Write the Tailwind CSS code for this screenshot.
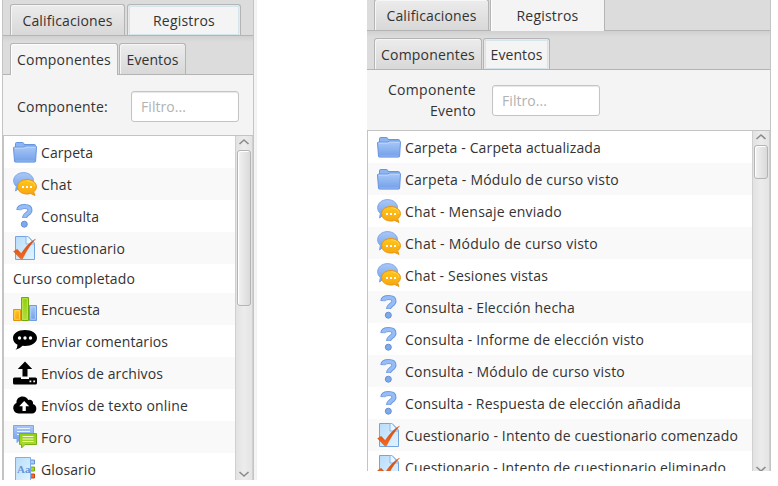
<!DOCTYPE html>
<html lang="es">
<head>
<meta charset="utf-8">
<title>Registros</title>
<script src="https://cdn.jsdelivr.net/npm/@tailwindcss/browser@4"></script>
</head>
<body class="w-[778px] h-[486px] overflow-hidden bg-white font-['Open_Sans','Noto_Sans',sans-serif] text-[14px] text-[#333] whitespace-nowrap">
<svg class="absolute w-0 h-0">
  <defs>
    <linearGradient id="blue" x2="0" y2="1"><stop stop-color="#a9c8f8"/><stop offset="1" stop-color="#719fe8"/></linearGradient>
    <linearGradient id="orange" x2="0" y2="1"><stop stop-color="#ffc61c"/><stop offset="1" stop-color="#f9a40c"/></linearGradient>
    <linearGradient id="green" x2="0" y2="1"><stop stop-color="#8fd00c"/><stop offset="1" stop-color="#b4dc3c"/></linearGradient>
    <linearGradient id="page" x2="1" y2="1"><stop stop-color="#b9dcfa"/><stop offset="1" stop-color="#e0f4ff"/></linearGradient>
    <linearGradient id="tick" x2="0" y2="1"><stop stop-color="#c84a14"/><stop offset="1" stop-color="#f8681c"/></linearGradient>
  </defs>
  <symbol id="folder" viewBox="0 0 24 24">
    <path d="M2.500 7V3.500q0-1 1-1h6q1 0 1.300 1L11 4.500h10.500q1 0 1 1V10h-20z" fill="#8db5f2" stroke="#6795df"/>
    <path d="M.5 8q0-.9 1-.9h9.500l1-1h10.500q1.100 0 1 1l-.9 14q0 1-1 1H2.500q-1 0-1-1z" fill="url(#blue)" stroke="#6594df"/>
    <path d="M1.700 8.200h9.800l1-1h9.900" fill="none" stroke="#c0d8fb"/>
    <path d="M2.500 21h19" stroke="#8fb6f2"/>
  </symbol>
  <symbol id="chat" viewBox="0 0 24 24">
    <path d="M10.500.6C16 .6 20.500 4.200 20.500 8.800S16 17.500 10.500 17.500q-2.500 0-4.700-1L2.500 19l.8-4.400Q.6 12 .6 8.800C.6 4.200 5 .6 10.500.6z" fill="url(#blue)" stroke="#7ea7e6"/>
    <path d="M14 7.500c5 0 9.400 3 9.400 7.100 0 2.300-1 4-2.800 5.300l1.400 3.500-4.500-2q-1.500.6-3.500.6c-5.400 0-9.400-3-9.400-7.400s4.400-7.100 9.400-7.100z" fill="url(#orange)" stroke="#e8920c"/>
    <path d="M14 8.800c4 0 7.700 2.300 8 5.500" fill="none" stroke="#ffdc64" stroke-width=".8"/>
    <path d="M9 14h2v2H9zM13 14h2v2h-2zM17 14h2v2h-2z" fill="#fff"/>
  </symbol>
  <symbol id="question" viewBox="0 0 24 24">
    <path d="M5.800 6.200C6 2.900 8.300 2.600 11.700 2.600s5.300 1.300 5.300 3.700c0 3.500-5.400 3.600-5.400 7.700" fill="none" stroke="#6b9ae2" stroke-width="5"/>
    <path d="M5.800 5.500C6.500 3.100 8.300 2.600 11.700 2.600s5.200 1.300 5.200 3.700c0 3.300-5.200 3.500-5.200 7.100" fill="none" stroke="#98bcf5" stroke-width="3.200"/>
    <circle cx="11.300" cy="20.200" r="3" fill="#7fa9ed" stroke="#638fd8"/>
  </symbol>
  <symbol id="quiz" viewBox="0 0 24 24">
    <path d="M2.500.5h12.500l6.500 6.500v16.500h-19z" fill="url(#page)" stroke="#74a4e2"/>
    <path d="M13 .5V8h8.500L15 .5z" fill="#e8f6ff" stroke="#8ab5ea"/>
    <path d="M.6 15.500l3.600-2.300 4 4.300C12 12 16 6.500 22.500 3 17 9 13.500 15 9.500 22.800H7.600z" fill="url(#tick)" stroke="#d0521a" stroke-width=".4"/>
  </symbol>
  <symbol id="chart" viewBox="0 0 24 24">
    <path d="M.6 12.500h7v11h-7z" fill="url(#orange)" stroke="#e5900c"/>
    <path d="M1.800 13.700h4.700v8.600H1.800z" fill="none" stroke="#ffdc62" stroke-width=".8"/>
    <path d="M16.500 8.500h7v15h-7z" fill="url(#blue)" stroke="#6f9be0"/>
    <path d="M17.700 9.700h4.700v12.600h-4.700z" fill="none" stroke="#b8d4fc" stroke-width=".8"/>
    <path d="M8.500.5h7v23h-7z" fill="url(#green)" stroke="#70ac08"/>
    <path d="M9.700 1.700h4.700v20.600H9.700z" fill="none" stroke="#c2e95e" stroke-width=".8"/>
  </symbol>
  <symbol id="comment" viewBox="0 0 24 24">
    <path d="M12 1c7 0 12 3.500 12 8s-5.500 8-12 8l-2.500-.2Q7 20 2.500 20.700q2-2 2-5Q0 13.500 0 9c0-4.500 5-8 12-8z"/>
    <g fill="#fff"><circle cx="6.500" cy="9" r="1.700"/><circle cx="12" cy="9" r="1.700"/><circle cx="17.500" cy="9" r="1.700"/></g>
  </symbol>
  <symbol id="upload" viewBox="0 0 24 24">
    <path d="M12 .5l7.200 7.500h-4.700v7.500h-5V8H4.800z"/>
    <path d="M1.500 16.500H8v1.400h8v-1.400h6.500q1.500 0 1.500 1.500v4q0 1.500-1.500 1.500h-21Q0 23.500 0 22v-4q0-1.500 1.500-1.500z"/>
    <path d="M16.500 19.500h1.800v1.800h-1.800zM20.300 19.500h1.800v1.800h-1.800z" fill="#fff"/>
  </symbol>
  <symbol id="cloud" viewBox="0 0 24 24">
    <path d="M5.500 20.500a5.500 5.500 0 0 1-2-10.500C3.200 6 6 3.500 9.500 3.500c2.800 0 4.800 1.400 5.700 3.600 2.600-1.200 5.300.5 4.800 3.900a4.900 4.900 0 0 1-1 9.500z"/>
    <path d="M11.200 8l5 5.300h-3.400V18H9.500v-4.700H6.200z" fill="#fff"/>
  </symbol>
  <symbol id="forum" viewBox="0 0 24 24">
    <path d="M.5 .5h20v13H8l-4 4v-4H.5z" fill="url(#blue)" stroke="#7da8e8"/>
    <path d="M4 3.500h13M4 6.500h13M4 9.500h5" stroke="#e8f3ff"/>
    <path d="M6.500 8.500h17v11H12L8.500 23v-3.500h-2z" fill="url(#green)" stroke="#77b010"/>
    <path d="M9.500 11.500h11M9.500 14h11M9.500 16.500h11" stroke="#f2fbd0"/>
  </symbol>
  <symbol id="glossary" viewBox="0 0 24 24">
    <path d="M17 3h4.500v4H17z" fill="#a9ccfa" stroke="#5e91dc"/>
    <path d="M17 10h4.500v4H17z" fill="#a5d82c" stroke="#70a90b"/>
    <path d="M17 17h4.500v4H17z" fill="#f36b2c" stroke="#c9440e"/>
    <path d="M2.500.5h15v23h-15z" fill="url(#page)" stroke="#80aeea"/>
    <text x="4" y="15.500" font-family="Liberation Serif" font-weight="bold" font-size="11" fill="#6494d8">Aa</text>
  </symbol>
  <symbol id="up" viewBox="0 0 12 8"><path d="M1.500 6L6 2l4.500 4" fill="none" stroke="#8b8b8b" stroke-width="1.600"/></symbol>
  <symbol id="down" viewBox="0 0 12 8"><path d="M1.500 2L6 6l4.500-4" fill="none" stroke="#8b8b8b" stroke-width="1.600"/></symbol>
</svg>
<div class="flex items-start">
  <section class="ml-[2px] w-[255px] h-[480px] bg-[#f4f4f4] border-r border-[#f0f0f0] overflow-hidden">
    <div class="w-[252px] h-full border-x border-[#c4c4c4] flex flex-col">
      <div class="h-[36px] shrink-0 border-b border-[#b4b4b4] bg-[#dcdcdc] flex items-end pl-[7px]">
        <div class="w-[115px] h-[31px] border border-b-0 border-[#b4b4b4] rounded-t-[3px] bg-linear-to-b from-[#ececec] to-[#d8d8d8] shadow-[inset_1px_1px_#f6f6f6] flex items-center justify-center"><span data-w="89">Calificaciones</span></div>
        <div class="ml-[2px] w-[114px] h-[31px] border border-b-0 border-[#b4b4b4] rounded-t-[3px] bg-[#e9e9e9] p-[1px] pb-0"><div class="h-[29px] border border-[#d5e5ec] bg-[#f4f4f4] flex items-center justify-center pb-px"><span data-w="61">Registros</span></div></div>
      </div>
      <div class="h-[39px] shrink-0 border-b border-[#b4b4b4] bg-linear-to-b from-[#d0d0d0] to-[#dcdcdc] to-[6px] flex items-end pl-[7px]">
        <div class="w-[108px] h-[32px] -mb-px border border-b-0 border-[#b4b4b4] rounded-t-[3px] bg-[#f4f4f4] shadow-[inset_1px_1px_#fff] flex items-center justify-center"><span data-w="93">Componentes</span></div>
        <div class="ml-[1px] w-[67px] h-[31px] border border-b-0 border-[#b4b4b4] rounded-t-[3px] bg-linear-to-b from-[#ececec] to-[#d8d8d8] shadow-[inset_1px_1px_#f6f6f6] flex items-center justify-center pt-px"><span data-w="51">Eventos</span></div>
      </div>
      <div class="h-[60px] shrink-0 flex items-start pl-[14px] pt-[16px]">
        <div class="w-[114px] h-[31px] flex items-center"><span data-w="90">Componente:</span></div>
        <div class="w-[108px] h-[31px] border border-[#c4c4c4] rounded-[3px] bg-white shadow-[inset_0_1px_1px_#e8e8e8] flex items-center pl-[9px] text-[#b2b2b2]"><span data-w="44">Filtro...</span></div>
      </div>
      <div class="flex-1 min-h-0 border-t border-l border-[#c4c4c4] flex bg-white">
        <div id="components" class="w-[231px] overflow-hidden"></div>
        <div class="w-[18px] border-x border-[#d0d0d0] bg-linear-to-r from-[#e2e2e2] via-[#ececec] to-[#e4e4e4] flex flex-col items-center px-px">
          <svg class="w-[12px] h-[8px] mt-[2px] mb-[4px] shrink-0"><use href="#up"/></svg>
          <div class="w-[14px] h-[156px] shrink-0 border border-[#b4b4b4] rounded-[3px] bg-linear-to-r from-[#f2f2f2] to-[#dadada] shadow-[inset_1px_1px_#fff]"></div>
          <svg class="w-[12px] h-[8px] mt-auto mb-[2px] shrink-0"><use href="#down"/></svg>
        </div>
      </div>
    </div>
  </section>
  <section class="ml-[110px] w-[404px] h-[471px] bg-[#f4f4f4] border-r border-[#c4c4c4] overflow-hidden flex flex-col">
    <div class="h-[31px] shrink-0 border-b border-[#b4b4b4] bg-[#dcdcdc] flex items-end pl-[7px]">
      <div class="w-[115px] h-[31px] border border-b-0 border-[#b4b4b4] rounded-t-[3px] bg-linear-to-b from-[#ececec] to-[#d8d8d8] shadow-[inset_1px_1px_#f6f6f6] flex items-center justify-center"><span data-w="89">Calificaciones</span></div>
      <div class="ml-[1px] w-[115px] h-[32px] -mb-px border border-y-0 border-[#b4b4b4] bg-[#f4f4f4] shadow-[inset_1px_1px_#fff] flex items-center justify-center"><span data-w="61">Registros</span></div>
    </div>
    <div class="h-[39px] shrink-0 border-b border-[#b4b4b4] bg-linear-to-b from-[#d0d0d0] to-[#dcdcdc] to-[6px] flex items-end pl-[7px]">
      <div class="w-[108px] h-[31px] border border-b-0 border-[#b4b4b4] rounded-t-[3px] bg-linear-to-b from-[#ececec] to-[#d8d8d8] shadow-[inset_1px_1px_#f6f6f6] flex items-center justify-center pt-px"><span data-w="93">Componentes</span></div>
      <div class="ml-[1px] w-[67px] h-[31px] border border-b-0 border-[#b4b4b4] rounded-t-[3px] bg-[#e9e9e9] p-[1px] pb-0"><div class="h-[29px] border border-[#d5e5ec] bg-[#f4f4f4] flex items-center justify-center pb-px"><span data-w="51">Eventos</span></div></div>
    </div>
    <div class="h-[60px] shrink-0 flex items-start pt-[9px]">
      <div class="w-[109px] leading-[21px] flex flex-col items-end"><span data-w="87">Componente</span><span data-w="45">Evento</span></div>
      <div class="ml-[16px] mt-[6px] w-[108px] h-[31px] border border-[#c4c4c4] rounded-[3px] bg-white shadow-[inset_0_1px_1px_#e8e8e8] flex items-center pl-[9px] text-[#b2b2b2]"><span data-w="44">Filtro...</span></div>
    </div>
    <div class="flex-1 min-h-0 border-t border-l border-[#c4c4c4] flex bg-white">
      <div id="events" class="w-[384px] overflow-hidden"></div>
      <div class="w-[18px] border-x border-[#d0d0d0] bg-linear-to-r from-[#e2e2e2] via-[#ececec] to-[#e4e4e4] flex flex-col items-center px-px">
        <svg class="w-[12px] h-[8px] mt-[2px] mb-[4px] shrink-0"><use href="#up"/></svg>
        <div class="w-[14px] h-[34px] shrink-0 border border-[#b4b4b4] rounded-[3px] bg-linear-to-r from-[#f2f2f2] to-[#dadada] shadow-[inset_1px_1px_#fff]"></div>
        <svg class="w-[12px] h-[8px] mt-auto -mb-[2px] shrink-0"><use href="#down"/></svg>
      </div>
    </div>
  </section>
</div>
<script>
const components = [
  ['folder','Carpeta',51],['chat','Chat',30],['question','Consulta',57],['quiz','Cuestionario',83],
  ['','Curso completado',121],['chart','Encuesta',58],['comment','Enviar comentarios',126],
  ['upload','Envíos de archivos',121],['cloud','Envíos de texto online',146],['forum','Foro',30],['glossary','Glosario',54]];
const events = [
  ['folder','Carpeta - Carpeta actualizada',195],['folder','Carpeta - Módulo de curso visto',213],
  ['chat','Chat - Mensaje enviado',156],['chat','Chat - Módulo de curso visto',192],['chat','Chat - Sesiones vistas',142],
  ['question','Consulta - Elección hecha',169],['question','Consulta - Informe de elección visto',238],
  ['question','Consulta - Módulo de curso visto',219],['question','Consulta - Respuesta de elección añadida',275],
  ['quiz','Cuestionario - Intento de cuestionario comenzado',332],['quiz','Cuestionario - Intento de cuestionario eliminado',320]];
const row = ([icon, label, w], i) =>
  `<div class="${icon ? 'h-[32px]' : 'h-[29px]'} pl-[9px] flex items-center ${i % 2 ? 'bg-[#f9f9f9]' : 'bg-white'}">` +
  (icon ? `<svg class="w-[24px] h-[24px] mr-[4px] shrink-0"><use href="#${icon}"/></svg>` : '') +
  `<span data-w="${w}">${label}</span></div>`;
document.getElementById('components').innerHTML = components.map(row).join('');
document.getElementById('events').innerHTML = events.map(row).join('');
// Tune tracking so each label takes its intended width, once the fonts are ready.
const fit = () => document.querySelectorAll('[data-w]').forEach(el => {
  let extra = -0.01;
  for (let step = 0; step < 4; step++) {
    el.style.letterSpacing = extra.toFixed(3) + 'px';
    extra += (Number(el.dataset.w) + 1 - el.getBoundingClientRect().width) / el.textContent.length;
  }
});
fit();
window.addEventListener('load', fit);
document.fonts.ready.then(fit);
</script>
</body>
</html>
